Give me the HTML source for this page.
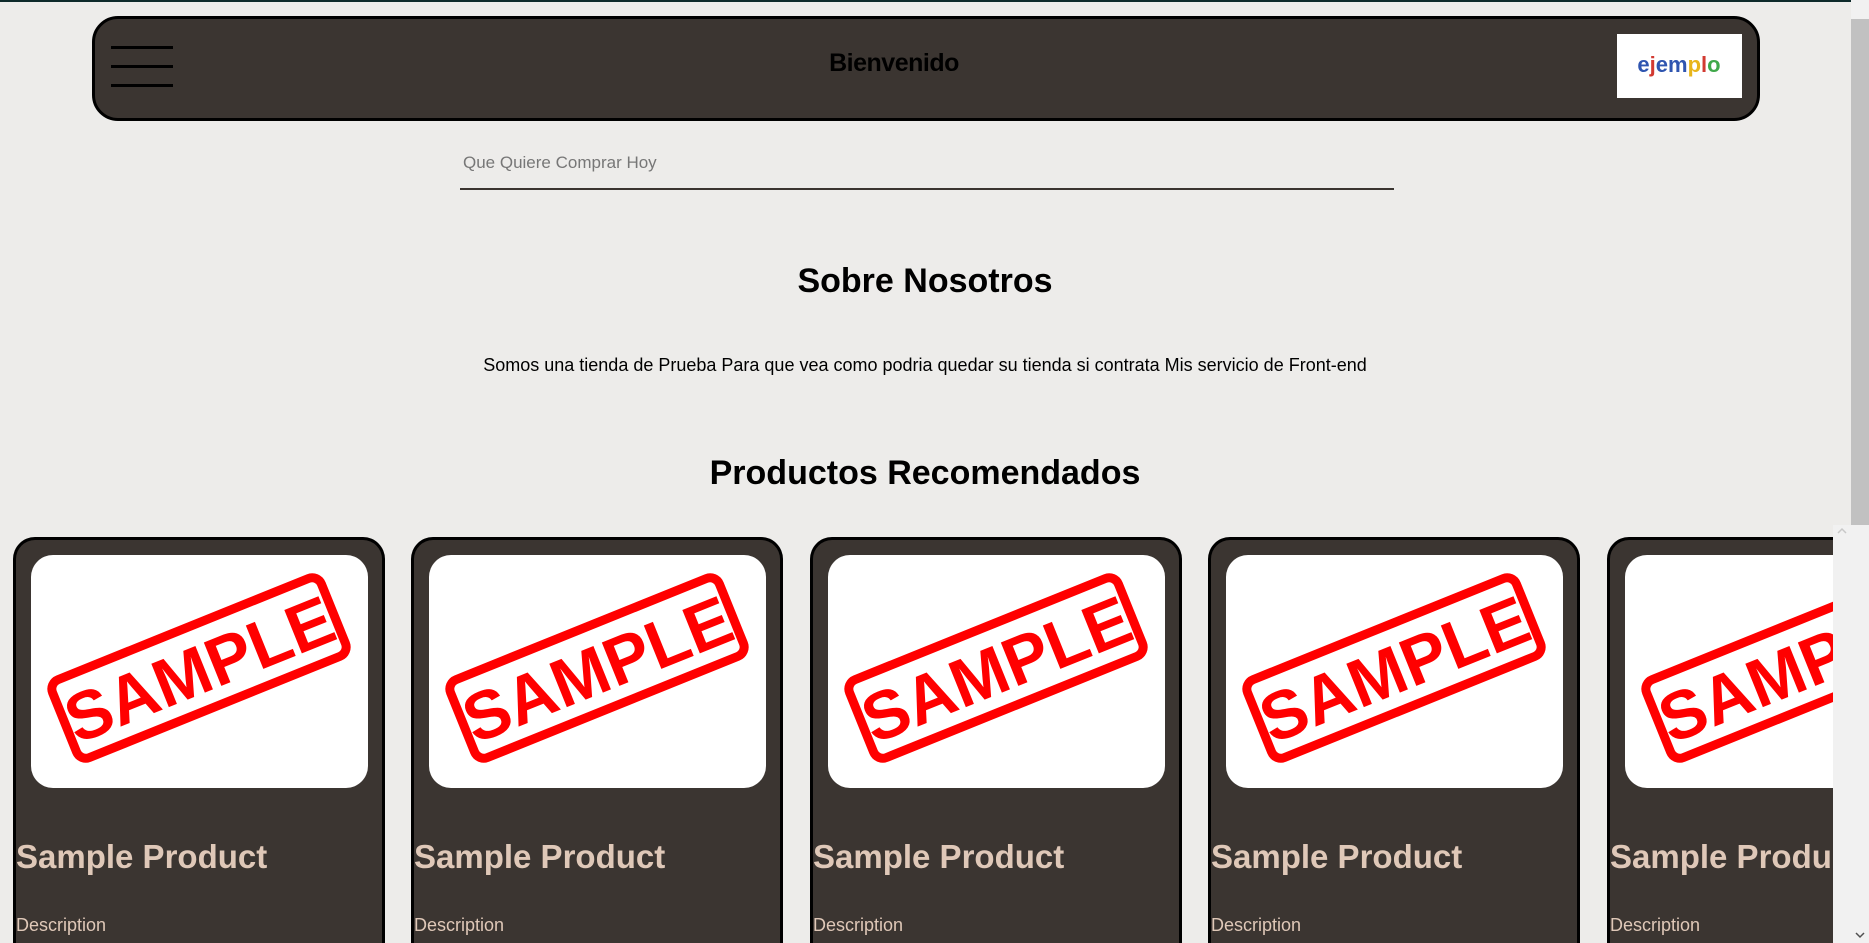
<!DOCTYPE html>
<html><head><meta charset="utf-8"><style>
html,body{margin:0;padding:0;height:943px;overflow:hidden}
body{width:1869px;background:#edecea;font-family:"Liberation Sans",sans-serif;position:relative}
.topline{position:absolute;left:0;top:0;width:1869px;height:2px;background:#0d2a2a}
.header{position:absolute;left:92px;top:16px;width:1662px;height:99px;background:#3b3531;border:3px solid #000;border-radius:26px}
.hb{position:absolute;left:16px;width:62px;height:3px;background:#000}
.title{position:absolute;left:0;right:64px;top:30px;text-align:center;font-weight:bold;font-size:25px;color:#000;letter-spacing:-0.5px}
.logo{position:absolute;left:1522px;top:15px;width:125px;height:64px;background:#fff}
.search{position:absolute;left:460px;top:150px;width:931px;height:38px;border-bottom:2px solid #3b3531;font-size:17px;color:#777;padding-left:3px;line-height:26px}
h2{position:absolute;left:0;width:1850px;text-align:center;margin:0;font-weight:bold;color:#000}
.p{position:absolute;left:0;width:1850px;top:355px;text-align:center;font-size:18px}
.card{position:absolute;top:537px;width:366px;height:403px;background:#3b3531;border:3px solid #000;border-bottom:none;border-radius:22px 22px 0 0;overflow:hidden}
.img{position:absolute;left:15px;top:15px;width:337px;height:233px;background:#fff;border-radius:22px;overflow:hidden}
.ct{position:absolute;left:0;top:298px;font-size:33px;font-weight:bold;color:#dfc8b8;white-space:nowrap}
.cd{position:absolute;left:0;top:375px;font-size:18px;color:#dfc8b8}
.sb{position:absolute;left:1851px;top:0;width:18px;height:943px;background:#f1f1f1}
.thumb{position:absolute;left:1851px;top:19px;width:18px;height:516px;background:#c1c1c1}
.isb{position:absolute;left:1833px;top:525px;width:36px;height:418px;background:#f1f1f1}
</style></head><body>
<div class="topline"></div>
<div class="header">
<div class="hb" style="top:27px"></div><div class="hb" style="top:46px"></div><div class="hb" style="top:65px"></div>
<div class="title">Bienvenido</div>
<div class="logo"><svg width="125" height="64"><text x="62" y="38" text-anchor="middle" font-family="Liberation Sans" font-weight="bold" font-size="22"><tspan fill="#2f55b0">e</tspan><tspan fill="#d23a32">j</tspan><tspan fill="#2f55b0">em</tspan><tspan fill="#e8b51a">p</tspan><tspan fill="#d23a32">l</tspan><tspan fill="#3fa84a">o</tspan></text></svg></div>
</div>
<div class="search">Que Quiere Comprar Hoy</div>
<h2 style="top:262px;font-size:34px">Sobre Nosotros</h2>
<div class="p">Somos una tienda de Prueba Para que vea como podria quedar su tienda si contrata Mis servicio de Front-end</div>
<h2 style="top:454px;font-size:34px">Productos Recomendados</h2>

<div class="card" style="left:13px"><div class="img"><svg width="337" height="233"><g transform="translate(168,113) rotate(-22)"><rect x="-145" y="-42" width="290" height="84" rx="10" fill="none" stroke="#f00" stroke-width="9"/><text x="0" y="25" text-anchor="middle" font-family="Liberation Sans" font-weight="bold" font-size="68" fill="#f00">SAMPLE</text></g></svg></div><div class="ct">Sample Product</div><div class="cd">Description</div></div>
<div class="card" style="left:411px"><div class="img"><svg width="337" height="233"><g transform="translate(168,113) rotate(-22)"><rect x="-145" y="-42" width="290" height="84" rx="10" fill="none" stroke="#f00" stroke-width="9"/><text x="0" y="25" text-anchor="middle" font-family="Liberation Sans" font-weight="bold" font-size="68" fill="#f00">SAMPLE</text></g></svg></div><div class="ct">Sample Product</div><div class="cd">Description</div></div>
<div class="card" style="left:810px"><div class="img"><svg width="337" height="233"><g transform="translate(168,113) rotate(-22)"><rect x="-145" y="-42" width="290" height="84" rx="10" fill="none" stroke="#f00" stroke-width="9"/><text x="0" y="25" text-anchor="middle" font-family="Liberation Sans" font-weight="bold" font-size="68" fill="#f00">SAMPLE</text></g></svg></div><div class="ct">Sample Product</div><div class="cd">Description</div></div>
<div class="card" style="left:1208px"><div class="img"><svg width="337" height="233"><g transform="translate(168,113) rotate(-22)"><rect x="-145" y="-42" width="290" height="84" rx="10" fill="none" stroke="#f00" stroke-width="9"/><text x="0" y="25" text-anchor="middle" font-family="Liberation Sans" font-weight="bold" font-size="68" fill="#f00">SAMPLE</text></g></svg></div><div class="ct">Sample Product</div><div class="cd">Description</div></div>
<div class="card" style="left:1607px"><div class="img"><svg width="337" height="233"><g transform="translate(168,113) rotate(-22)"><rect x="-145" y="-42" width="290" height="84" rx="10" fill="none" stroke="#f00" stroke-width="9"/><text x="0" y="25" text-anchor="middle" font-family="Liberation Sans" font-weight="bold" font-size="68" fill="#f00">SAMPLE</text></g></svg></div><div class="ct">Sample Product</div><div class="cd">Description</div></div>

<div class="sb"></div><div class="thumb"></div>
<div class="isb"><svg width="36" height="418"><path d="M5 8 L9 4 L13 8" stroke="#c8c8c8" stroke-width="1.5" fill="none"/><path d="M23 408 L27 412 L31 408" stroke="#505050" stroke-width="1.5" fill="none"/></svg></div>
</body></html>
